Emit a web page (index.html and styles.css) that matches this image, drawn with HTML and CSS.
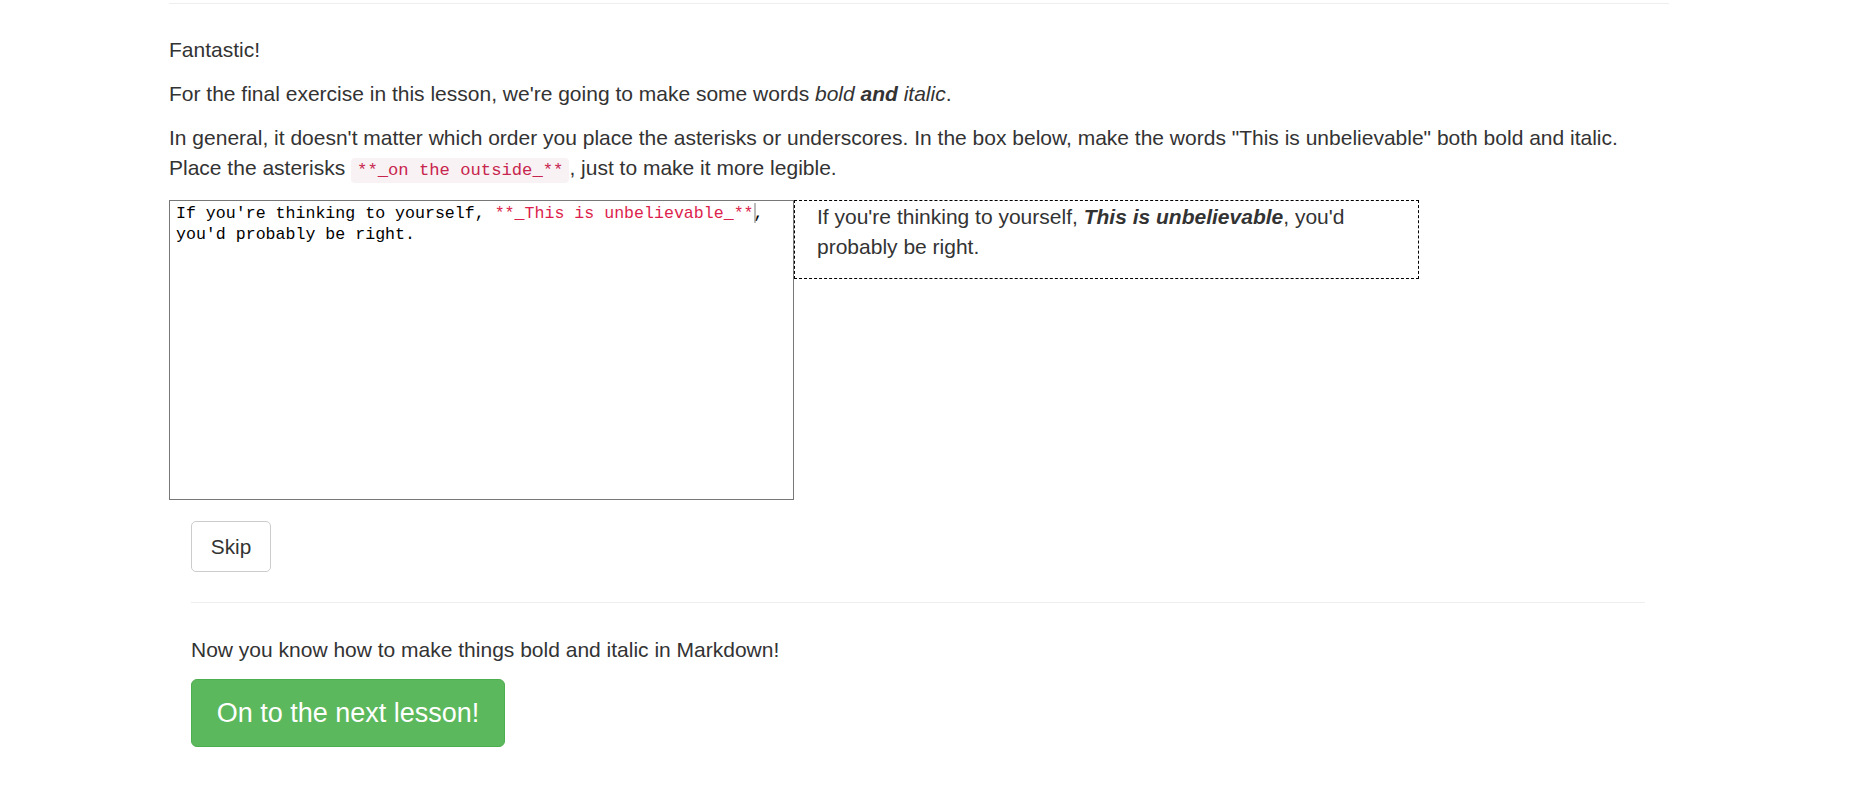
FILE: index.html
```html
<!DOCTYPE html>
<html lang="en">
<head>
<meta charset="utf-8">
<title>Markdown lesson</title>
<link rel="stylesheet" href="styles.css">
</head>
<body>
<div class="container">
  <hr class="rule-top">
  <p class="first">Fantastic!</p>
  <p>For the final exercise in this lesson, we're going to make some words <em>bold <strong>and</strong> italic</em>.</p>
  <p>In general, it doesn't matter which order you place the asterisks or underscores. In the box below, make the words "This is unbelievable" both bold and italic. Place the asterisks <code>**_on the outside_**</code>, just to make it more legible.</p>

  <div class="exercise">
    <div class="editor">If you're thinking to yourself, <span class="md">**_This is unbelievable_**</span><span class="cursor"></span>, you'd probably be right.</div>
    <div class="preview">
      <p>If you're thinking to yourself, <strong><em>This is unbelievable</em></strong>, you'd probably be right.</p>
    </div>
  </div>

  <div class="inner">
    <div class="actions">
      <button class="btn btn-default">Skip</button>
    </div>
    <hr class="rule-inner">
    <p class="done">Now you know how to make things bold and italic in Markdown!</p>
    <button class="btn btn-success">On to the next lesson!</button>
  </div>
</div>
</body>
</html>
```

FILE: styles.css
```css
html, body {
  margin: 0;
  padding: 0;
  background: #fff;
}

body {
  font-family: "Liberation Sans", Arial, Helvetica, sans-serif;
  font-size: 21px;
  line-height: 30px;
  color: #333;
}

.container {
  width: 1500px;
  margin-left: 169px;
}

hr {
  border: 0;
  border-top: 1px solid #eee;
  margin: 0;
}

.rule-top {
  margin-top: 3px;
}

p {
  margin: 0 0 14px;
}

p.first {
  margin-top: 31px;
}

code {
  font-family: "Liberation Mono", "DejaVu Sans Mono", monospace;
  font-size: 17.2px;
  color: #c7254e;
  background: #f9f2f4;
  border-radius: 4px;
  padding: 3px 6px;
}

.exercise {
  display: flex;
  align-items: flex-start;
  margin-top: 0;
}

.editor {
  box-sizing: border-box;
  width: 625px;
  height: 300px;
  border: 1px solid #777;
  padding: 2px 6px;
  font-family: "Liberation Mono", "DejaVu Sans Mono", monospace;
  font-size: 16.6px;
  line-height: 21px;
  color: #000;
  white-space: normal;
}

.editor .md {
  color: #dc1e4c;
}

.cursor {
  display: inline-block;
  width: 0;
  height: 20px;
  vertical-align: top;
  border-left: 2px solid #bbb;
  margin-right: -2px;
}

.preview {
  box-sizing: border-box;
  width: 625px;
  border: 1px dashed #000;
  padding: 1px 22px 2px;
}

.inner {
  margin-left: 22px;
  width: 1454px;
}

.actions {
  margin-top: 21px;
}

.btn {
  display: inline-block;
  font-family: "Liberation Sans", Arial, Helvetica, sans-serif;
  cursor: pointer;
  box-sizing: border-box;
}

.btn-default {
  height: 51px;
  width: 80px;
  padding: 0;
  font-size: 20.8px;
  line-height: 49px;
  color: #333;
  background: #fff;
  border: 1px solid #ccc;
  border-radius: 5px;
}

.rule-inner {
  margin-top: 30px;
}

p.done {
  margin-top: 32px;
}

.btn-success {
  height: 68px;
  width: 314px;
  padding: 0;
  font-size: 27px;
  line-height: 66px;
  color: #fff;
  background: #5cb85c;
  border: 1px solid #4cae4c;
  border-radius: 6px;
}
```
